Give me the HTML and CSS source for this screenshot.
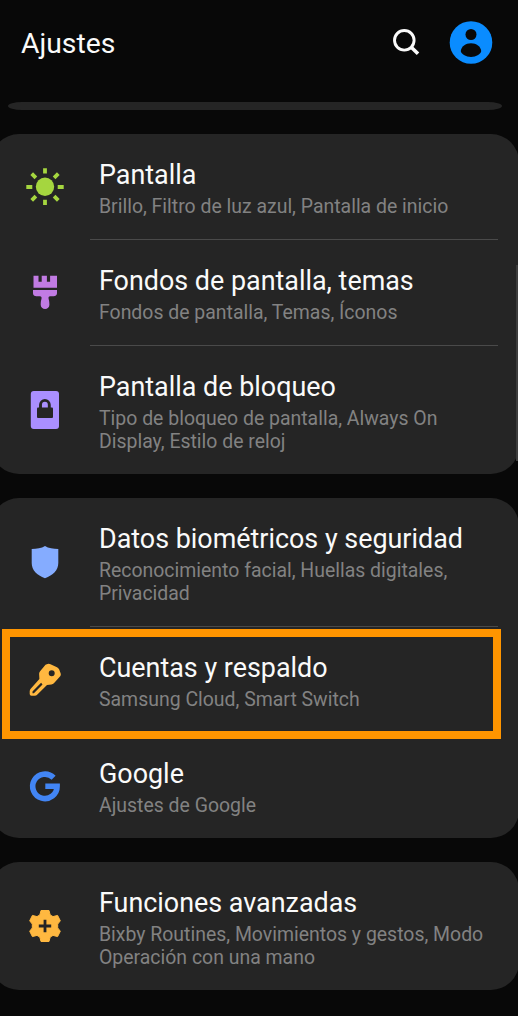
FILE: index.html
```html
<!DOCTYPE html>
<html lang="es">
<head>
<meta charset="utf-8">
<title>Ajustes</title>
<link rel="stylesheet" href="styles.css">
</head>
<body>
<header class="header">
  <h1 class="header-title">Ajustes</h1>
  <svg class="search" width="28" height="28" viewBox="0 0 28 28"><circle cx="12.3" cy="12.3" r="9.8" fill="none" stroke="#fafafa" stroke-width="2.9"/><path d="M19 19l7 6.8" stroke="#fafafa" stroke-width="3.6"/></svg>
  <svg width="44" height="44" viewBox="0 0 44 44"><circle cx="22" cy="22.5" r="21.3" fill="#0a8cff"/><circle cx="22" cy="14.5" r="5.5" fill="#090909"/><path d="M11.8 31C12.2 26.500 16.600 23.200 22 23.200s9.800 3.300 10.200 7.800c.2 2.700-5.200 6-10.200 6s-10.400-3.300-10.200-6z" fill="#090909"/></svg>
</header>
<div class="card-edge"></div>
<main class="list">
  <section class="card">
    <article class="row">
      <svg class="icon" viewBox="0 0 40 40"><circle cx="20" cy="19.700" r="9.200" fill="#a5d63f"/><path d="M20 1.200v5.300M20 32.800v5.300M1.300 20h6M32.700 20h6M6.700 6.700l4.200 4.200M29.100 29.100l4.200 4.200M6.700 33.300l4.200-4.200M29.100 10.900l4.200-4.200" stroke="#a5d63f" stroke-width="3.800"/></svg>
      <div class="text"><h2>Pantalla</h2><p>Brillo, Filtro de luz azul, Pantalla de inicio</p></div>
    </article>
    <article class="row divided">
      <svg class="icon" viewBox="0 0 40 40"><path d="M8.500 2.700h5v6h3.200v-6h5.200v6h3.200v-6H32v12H8.500zM8 17h24v3.200c0 2-1.600 3-3.400 3h-3.400c-1.600 0-2 1.300-1.500 3 .5 1.500.7 3.500.7 5.500a4.300 4.300 0 0 1-8.700 0c0-2 .2-4 .7-5.500.5-1.700 0-3-1.500-3h-3.500C9.500 23.200 8 22.200 8 20.200z" fill="#c17be3"/></svg>
      <div class="text"><h2>Fondos de pantalla, temas</h2><p>Fondos de pantalla, Temas, Íconos</p></div>
    </article>
    <article class="row divided tall">
      <svg class="icon" viewBox="0 0 40 40"><rect x="5.800" y="1" width="28.200" height="38" rx="3" fill="#aa8fff"/><rect x="12" y="17.500" width="16" height="10.500" rx="1" fill="#252525"/><path d="M15.500 18v-3.200a4.400 4.400 0 0 1 8.800 0V18" fill="none" stroke="#252525" stroke-width="2.900"/></svg>
      <div class="text"><h2>Pantalla de bloqueo</h2><p>Tipo de bloqueo de pantalla, Always On<br>Display, Estilo de reloj</p></div>
    </article>
    <div class="scrollbar"></div>
  </section>
  <section class="card">
    <article class="row tall first-tall">
      <svg class="icon" viewBox="0 0 40 40"><path d="M20 3c3.600 2.200 8.200 3 13.300 3v14c0 7.200-5.200 12.300-13.300 15.200C11.900 32.300 6.700 27.200 6.700 20V6c5.100 0 9.700-.8 13.300-3z" fill="#85acff"/></svg>
      <div class="text"><h2>Datos biométricos y seguridad</h2><p>Reconocimiento facial, Huellas digitales,<br>Privacidad</p></div>
    </article>
    <article class="row divided">
      <svg class="icon" viewBox="0 0 40 40"><path fill="#ffb840" fill-rule="evenodd" d="M20.500 4.800L22.500 4q1.500-.4 3 .2l6.500 3q1.500.7 2.200 2.200l1.500 4.200q.5 1.500-.5 2.700l-6.300 7q-1 1-2.500 1.200l-4.400.5-9.600 9.500q-1.200 1.200-2.700 1.200H6.500q-1.800 0-1.800-1.800v-2.700q0-1.400 1-2.500l8.700-9.600-.3-5.400q0-1.400 1-2.500zM26.700 10.200a3 3 0 1 0 0 6 3 3 0 1 0 0-6zM7.500 31.500v1.700l1.400.1 8.600-8.900-1.400-1.600z"/></svg>
      <div class="text"><h2>Cuentas y respaldo</h2><p>Samsung Cloud, Smart Switch</p></div>
      <div class="highlight"></div>
    </article>
    <article class="row last">
      <svg class="icon" viewBox="0 0 40 40"><path d="M28.600 11.800A12.200 12.200 0 1 0 32.100 20.300H20.300" fill="none" stroke="#4285f4" stroke-width="5.600"/></svg>
      <div class="text"><h2>Google</h2><p>Ajustes de Google</p></div>
    </article>
  </section>
  <section class="card">
    <article class="row tall">
      <svg class="icon" viewBox="0 0 40 40"><path d="M16 4.500h8l1.200 4.500 2.800 1.600 4.600-1.200 2.700 5.400-2.600 3.300v3.800l2.600 3.300-2.700 5.400-4.600-1.200-2.800 1.600-1.200 4.500h-8L14.800 31 12 29.400l-4.600 1.200-2.700-5.400 2.600-3.300v-3.800l-2.600-3.300 2.700-5.400L12 10.600 14.800 9z" fill="#ffb840" stroke="#ffb840" stroke-width="1" stroke-linejoin="round"/><path d="M20 13.800v12.400M13.800 20h12.400" stroke="#252525" stroke-width="2.800"/></svg>
      <div class="text"><h2>Funciones avanzadas</h2><p>Bixby Routines, Movimientos y gestos, Modo<br>Operación con una mano</p></div>
    </article>
  </section>
</main>
</body>
</html>
```

FILE: styles.css
```css
* { box-sizing: border-box; }
body {
  margin: 0;
  height: 1016px;
  overflow: hidden;
  background: #080808;
  color: #fafafa;
  font-family: Roboto, "Noto Sans", sans-serif;
}
h1, h2, p { margin: 0; font-weight: 400; }
.header {
  height: 102px;
  padding: 20px 25px 0 21px;
  display: flex;
  align-items: flex-start;
}
.header-title { flex: 1; padding-top: 8px; font-size: 28.3px; line-height: 32px; }
.search { margin: 8px 29px 0 0; }
.card-edge {
  height: 8px;
  margin: 0 16px 24px 8px;
  border-radius: 14px / 4px;
  background: #252525;
}
.list { display: flex; flex-direction: column; gap: 24px; }
.card {
  position: relative;
  margin: 0 -1px 0 -9px;
  border-radius: 28px;
  background: #252525;
}
.row {
  position: relative;
  display: flex;
  align-items: center;
  height: 106px;
  padding: 0 10px 0 34px;
}
.row.tall { height: 128px; }
.row.first-tall { height: 129px; }
.row.last { height: 105px; }
.row.divided::before {
  content: "";
  position: absolute;
  top: -1px;
  left: 99px;
  right: 21px;
  height: 1px;
  background: #4a4a4a;
}
.icon { flex: none; width: 40px; height: 40px; }
.text { align-self: flex-start; padding: 25px 0 0 34px; white-space: nowrap; }
.text h2 { font-size: 26.9px; line-height: 32px; }
.text p { margin-top: 4px; font-size: 19.45px; line-height: 23px; color: #828282; }
.highlight {
  position: absolute;
  top: 2px;
  left: 11px;
  width: 499px;
  height: 110px;
  border: 8px solid #ff9500;
  z-index: 1;
}
.scrollbar {
  position: absolute;
  top: 131px;
  right: 1px;
  width: 2px;
  height: 196px;
  background: #3d3d3d;
}
```
